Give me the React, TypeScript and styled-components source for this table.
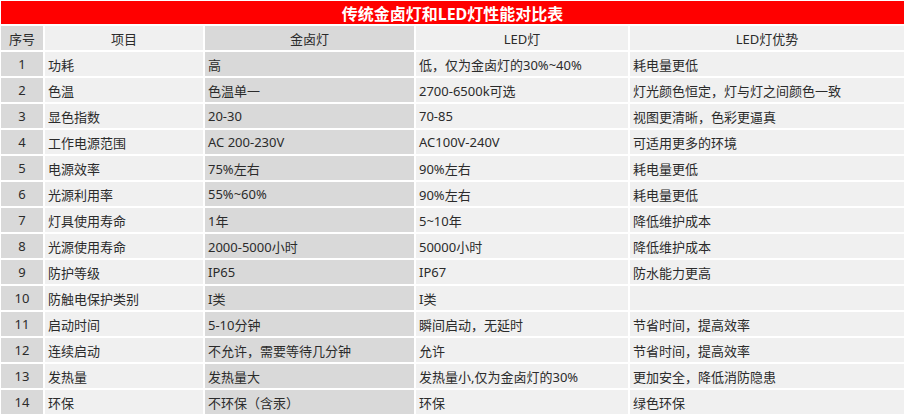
import { Fragment } from 'react';
import styled, { createGlobalStyle } from 'styled-components';

const GlobalStyle = createGlobalStyle`
  html, body {
    margin: 0;
    padding: 0;
    background: #ffffff;
  }
  body {
    font-family: "Noto Sans", "Noto Sans CJK SC", sans-serif;
  }
`;

type Row = [string, string, string, string];

const rows: Row[] = [
  ['功耗', '高', '低，仅为金卤灯的30%~40%', '耗电量更低'],
  ['色温', '色温单一', '2700-6500k可选', '灯光颜色恒定，灯与灯之间颜色一致'],
  ['显色指数', '20-30', '70-85', '视图更清晰，色彩更逼真'],
  ['工作电源范围', 'AC 200-230V', 'AC100V-240V', '可适用更多的环境'],
  ['电源效率', '75%左右', '90%左右', '耗电量更低'],
  ['光源利用率', '55%~60%', '90%左右', '耗电量更低'],
  ['灯具使用寿命', '1年', '5~10年', '降低维护成本'],
  ['光源使用寿命', '2000-5000小时', '50000小时', '降低维护成本'],
  ['防护等级', 'IP65', 'IP67', '防水能力更高'],
  ['防触电保护类别', 'I类', 'I类', ''],
  ['启动时间', '5-10分钟', '瞬间启动，无延时', '节省时间，提高效率'],
  ['连续启动', '不允许，需要等待几分钟', '允许', '节省时间，提高效率'],
  ['发热量', '发热量大', '发热量小,仅为金卤灯的30%', '更加安全，降低消防隐患'],
  ['环保', '不环保（含汞）', '环保', '绿色环保'],
];

const headers = ['序号', '项目', '金卤灯', 'LED灯', 'LED灯优势'];
const shades = ['dark', 'light', 'dark', 'light', 'light'] as const;

export default function App() {
  return (
    <>
      <GlobalStyle />
      <Table>
        <Title>传统金卤灯和LED灯性能对比表</Title>
        {headers.map((h, i) => (
          <Cell key={h} $shade={shades[i]} $align="center">
            {h}
          </Cell>
        ))}
        {rows.map((row, r) => (
          <Fragment key={r}>
            <Cell $shade="dark" $align="center">
              {r + 1}
            </Cell>
            {row.map((text, c) => (
              <Cell key={c} $shade={shades[c + 1]} $align="left">
                {text}
              </Cell>
            ))}
          </Fragment>
        ))}
      </Table>
    </>
  );
}

const Table = styled.div`
  display: grid;
  grid-template-columns: 42px 158px 209px 212px 274px;
  grid-auto-rows: 24px;
  grid-template-rows: 23px;
  gap: 2px;
  padding: 1px 0 0 1px;
  width: 904px;
`;

const Title = styled.div`
  grid-column: 1 / -1;
  background: #ff0000;
  color: #ffffff;
  font-size: 16px;
  font-weight: bold;
  display: flex;
  align-items: center;
  justify-content: center;
`;

const Cell = styled.div<{ $shade: 'dark' | 'light'; $align: 'left' | 'center' }>`
  background: ${(p) => (p.$shade === 'dark' ? '#d9d9d9' : '#f0f0f0')};
  color: #2b2b2b;
  font-size: 13px;
  display: flex;
  align-items: center;
  justify-content: ${(p) => (p.$align === 'center' ? 'center' : 'flex-start')};
  padding: 0 3px;
  white-space: nowrap;
  overflow: hidden;
`;
